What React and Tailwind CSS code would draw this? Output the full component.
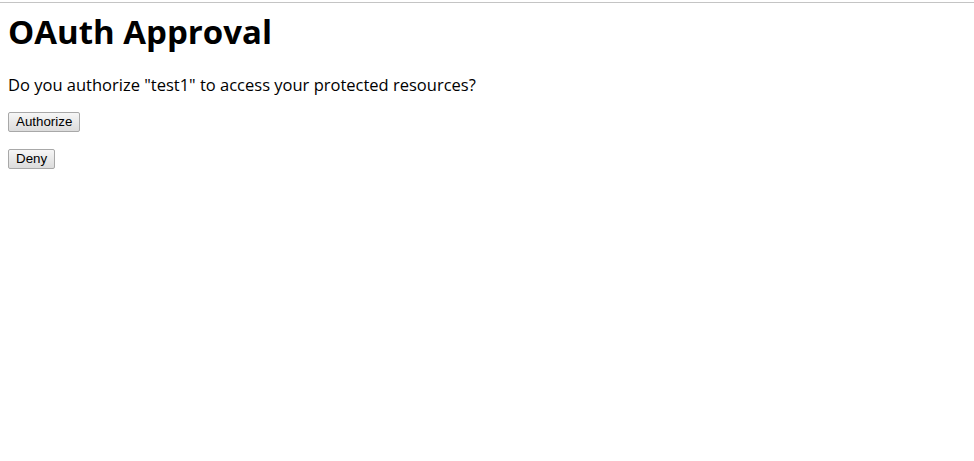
export default function App() {
  return (
    <div className="min-h-screen bg-white font-['Open_Sans','Noto_Sans',sans-serif] text-black">
      <div className="h-[2px]" />
      <div className="h-px bg-[#c4c4c4]" />
      <div className="px-2">
        <h1 className="mt-[9px] text-[33px] font-bold leading-[40px]">OAuth Approval</h1>
        <p className="mt-[22px] text-[16.5px] leading-[22px]">
          Do you authorize "test1" to access your protected resources?
        </p>
        <div className="mt-[16px] flex flex-col items-start gap-[17px]">
          <button className="h-[20px] rounded-[2px] border border-[#a8a8a8] bg-gradient-to-b from-[#f6f6f6] to-[#dcdcdc] px-[7px] font-['Liberation_Sans',Arial,sans-serif] text-[13.33px] leading-[18px]">
            Authorize
          </button>
          <button className="h-[20px] rounded-[2px] border border-[#a8a8a8] bg-gradient-to-b from-[#f6f6f6] to-[#dcdcdc] px-[7px] font-['Liberation_Sans',Arial,sans-serif] text-[13.33px] leading-[18px]">
            Deny
          </button>
        </div>
      </div>
    </div>
  );
}
